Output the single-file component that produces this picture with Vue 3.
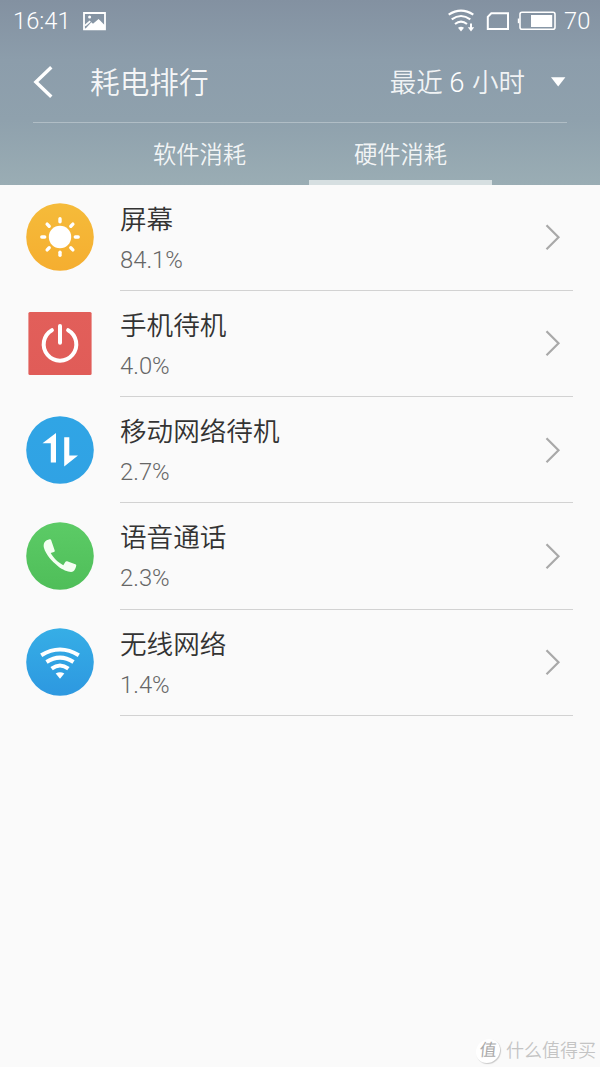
<template>
  <div class="screen">
    <header class="header">
      <div class="status-bar">
        <span class="clock">16:41</span>
        <svg class="picture-icon" width="24" height="19" viewBox="0 0 24 19">
          <path d="M1 1H22V17.3H1Z" fill="none" stroke="#fff" stroke-width="1.8" />
          <path d="M2 17.3L8.3 10.2L10 11.8L15.6 7L22 13.5V17.3Z" fill="#fff" />
          <path d="M2 13.7L7.2 9.1" stroke="#fff" stroke-width="1.8" />
          <circle cx="6.6" cy="4.9" r="1.5" fill="#fff" />
        </svg>
        <svg class="signal-icons" width="108" height="24" viewBox="448 9 108 24" fill="none" stroke="#fff">
          <path d="M448.7 14.7Q461 6.7 473.3 14.7" stroke-width="2.2" />
          <path d="M451.7 19.3Q461 12.7 470.3 19.3" stroke-width="2.2" />
          <path d="M455 24Q461 19.4 467 24" stroke-width="2.2" />
          <path d="M458 27.8Q461 25.8 464 27.8L461 31.4Z" fill="#fff" stroke="none" />
          <path d="M471 23.6V29" stroke-width="2" />
          <path d="M467.8 27.2H474.2L471 31.4Z" fill="#fff" stroke="none" />
          <path d="M491.3 13.3H508V29H487.8V16.8Z" stroke-width="2" />
          <rect x="520" y="12.3" width="35" height="17" rx="2" stroke-width="1.6" />
          <path d="M518.6 18.5V23.2" stroke-width="1.6" />
          <path d="M531 15H552.2V27H531Z" fill="#fff" stroke="none" />
        </svg>
        <span class="battery">70</span>
      </div>

      <div class="title-bar">
        <svg class="back" width="20" height="34" viewBox="0 0 20 34">
          <path d="M18.3 2.3L2.9 17L18.3 31.7" fill="none" stroke="#fff" stroke-width="3.4" />
        </svg>
        <h1>耗电排行</h1>
        <div class="period">
          <span class="period-text">最近 <span class="hours">6</span> 小时</span>
          <svg width="16" height="10" viewBox="0 0 16 10">
            <path d="M0 0.3H14.4L7.2 9.5Z" fill="#fff" />
          </svg>
        </div>
      </div>

      <nav class="tabs">
        <div
          v-for="tab in tabs"
          :key="tab"
          class="tab"
          :class="{ active: tab === activeTab }"
          @click="activeTab = tab"
        >{{ tab }}</div>
      </nav>
    </header>

    <ul class="list">
      <li v-for="item in items" :key="item.icon" class="row">
        <svg class="icon" width="68" height="68" viewBox="0 0 68 68">
          <defs>
            <linearGradient :id="'bg-' + item.icon" x1="0" y1="0" x2="0" y2="1">
              <stop offset="0" :stop-color="item.from" />
              <stop offset="1" :stop-color="item.to" />
            </linearGradient>
          </defs>
          <rect v-if="item.icon === 'power'" x="2.4" y="2.9" width="63.2" height="63" rx="1.5" :fill="`url(#bg-${item.icon})`" />
          <circle v-else cx="34" cy="34" r="33.8" :fill="`url(#bg-${item.icon})`" />

          <g v-if="item.icon === 'sun'">
            <circle cx="34" cy="34" r="11.2" fill="#fff" />
            <path
              v-for="n in 8"
              :key="n"
              d="M34 15.8V18.7"
              :transform="`rotate(${n * 45} 34 34)`"
              stroke="#fff"
              stroke-width="3.4"
              stroke-linecap="round"
            />
          </g>
          <g v-else-if="item.icon === 'power'" fill="none" stroke="#fff" stroke-width="4" stroke-linecap="round">
            <path d="M25.9 21.2A16.3 16.3 0 1 0 42.1 21.2" />
            <path d="M34 17V33.8" />
          </g>
          <g v-else-if="item.icon === 'data'" fill="#fff">
            <path d="M30 17V46.5H24.8V27.3H16.5Z" />
            <path d="M38.2 21.3H43.3V39.4H52L38.2 50.6Z" />
          </g>
          <g v-else-if="item.icon === 'call'" fill="#f4fff2">
            <path d="M18.4 20.4C19.4 18.6 21.8 17.8 23.6 17.3C24.5 17.1 24.9 17.5 25.2 18.3L28.7 28.6C28.9 29.3 28.6 29.8 27.9 30L24.7 31.1C27.3 36 32.2 40.6 37.3 43.2L39.3 40C39.7 39.2 40.4 39 41.2 39.2L49.3 42.2C50.1 42.5 50.4 43 50.2 43.8C49.7 46.1 48.9 48.4 47 49.5C44.1 50.9 37.3 48.2 32.3 44.4C25.7 39.4 19.8 32.4 18 26.1C17.5 24 17.5 22 18.4 20.4Z" />
          </g>
          <g v-else fill="none" stroke="#fff" stroke-width="4">
            <path d="M15.2 27.2Q34 15.7 52.8 27.2" />
            <path d="M20.5 34Q34 25.2 47.5 34" />
            <path d="M25.6 40.6Q34 34.4 42.4 40.6" />
            <path d="M29.7 45.6Q34 42.8 38.3 45.6L34 50.8Z" fill="#fff" stroke="none" />
          </g>
        </svg>
        <div class="content">
          <div class="text">
            <div class="name">{{ item.name }}</div>
            <div class="percent">{{ item.percent }}</div>
          </div>
          <svg class="arrow" width="16" height="28" viewBox="0 0 16 28">
            <path d="M1.5 2.3L13.5 14.3L1.5 26.3" fill="none" stroke="#a9a9a9" stroke-width="2.2" />
          </svg>
        </div>
      </li>
    </ul>

    <footer class="watermark">
      <span class="seal">值</span>
      <span class="brand">什么值得买</span>
    </footer>
  </div>
</template>

<script setup>
import { ref } from 'vue'

const tabs = ['软件消耗', '硬件消耗']
const activeTab = ref('硬件消耗')

const items = [
  { icon: 'sun', name: '屏幕', percent: '84.1%', from: '#f5bb3a', to: '#f5ae30' },
  { icon: 'power', name: '手机待机', percent: '4.0%', from: '#e25f5a', to: '#e05c58' },
  { icon: 'data', name: '移动网络待机', percent: '2.7%', from: '#30a5e5', to: '#30a2e4' },
  { icon: 'call', name: '语音通话', percent: '2.3%', from: '#5ccb66', to: '#4fbe59' },
  { icon: 'wifi', name: '无线网络', percent: '1.4%', from: '#36aee6', to: '#2d98e0' }
]
</script>

<style>
body {
  margin: 0;
  background: #fafafa;
}
</style>

<style scoped>
.screen {
  display: flex;
  flex-direction: column;
  box-sizing: border-box;
  width: 600px;
  height: 1067px;
  overflow: hidden;
  background: #fafafa;
  font-family: Roboto, "Noto Sans CJK SC", sans-serif;
  font-weight: 350;
}

.header {
  flex: none;
  height: 185px;
  color: #fff;
  background: linear-gradient(#8391a1 0, #8c9dab 60px, #8fa1ad 120px, #9aadb4 185px);
}

.status-bar {
  display: flex;
  align-items: center;
  height: 42px;
  padding: 0 11px 0 13px;
  font-size: 23.7px;
  font-weight: 300;
}

.clock {
  width: 70px;
}

.signal-icons {
  margin-left: auto;
}

.battery {
  width: 25px;
  margin-left: 8px;
}

.title-bar {
  display: flex;
  align-items: center;
  box-sizing: border-box;
  height: 81px;
  margin: 0 33px;
  padding-bottom: 1px;
  border-bottom: 1px solid rgba(255, 255, 255, 0.3);
}

h1 {
  margin: 0 0 0 37px;
  padding-bottom: 2px;
  font-size: 29.7px;
  font-weight: 350;
  color: rgba(255, 255, 255, 0.93);
}

.period {
  display: flex;
  align-items: center;
  gap: 26px;
  margin-left: auto;
  font-size: 26.5px;
}

.period-text {
  padding-bottom: 2px;
  color: rgba(255, 255, 255, 0.9);
}

.hours {
  margin: 0 1px 0 0;
  font-size: 27.5px;
  font-weight: 300;
  color: #fff;
}

.tabs {
  display: flex;
  justify-content: center;
  gap: 18px;
  height: 62px;
}

.tab {
  box-sizing: border-box;
  width: 183px;
  height: 62px;
  border-bottom: 5px solid transparent;
  line-height: 64px;
  font-size: 23.3px;
  text-align: center;
  color: rgba(255, 255, 255, 0.9);
}

.tab.active {
  border-bottom-color: #d6dfe1;
}

.list {
  margin: 0;
  padding: 0;
  list-style: none;
}

.row {
  display: flex;
  height: 106.15px;
  padding: 0 27px 0 26px;
}

.icon {
  margin-top: 18.3px;
}

.content {
  display: flex;
  justify-content: space-between;
  box-sizing: border-box;
  flex: 1;
  margin-left: 26px;
  padding-right: 12px;
  border-bottom: 1px solid #d2d2d2;
}

.text {
  padding-top: 14px;
}

.arrow {
  margin-top: 38.3px;
}

.name {
  height: 41px;
  line-height: 41px;
  font-size: 26.6px;
  color: #333;
}

.percent {
  height: 41px;
  line-height: 41px;
  font-size: 23.8px;
  font-weight: 300;
  color: #666;
}

.watermark {
  display: flex;
  align-items: center;
  justify-content: flex-end;
  gap: 6px;
  margin-top: auto;
  padding: 0 4px 3px 0;
  color: #c4c4c4;
}

.seal {
  width: 24px;
  height: 24px;
  border-radius: 50%;
  background: #fff;
  box-shadow: 1px 1px 1px #c8c8c8;
  line-height: 23px;
  font-size: 17px;
  font-weight: 400;
  text-align: center;
  color: #aaa;
  transform: skewX(-6deg);
}

.brand {
  font-size: 18px;
  line-height: 26px;
}
</style>
